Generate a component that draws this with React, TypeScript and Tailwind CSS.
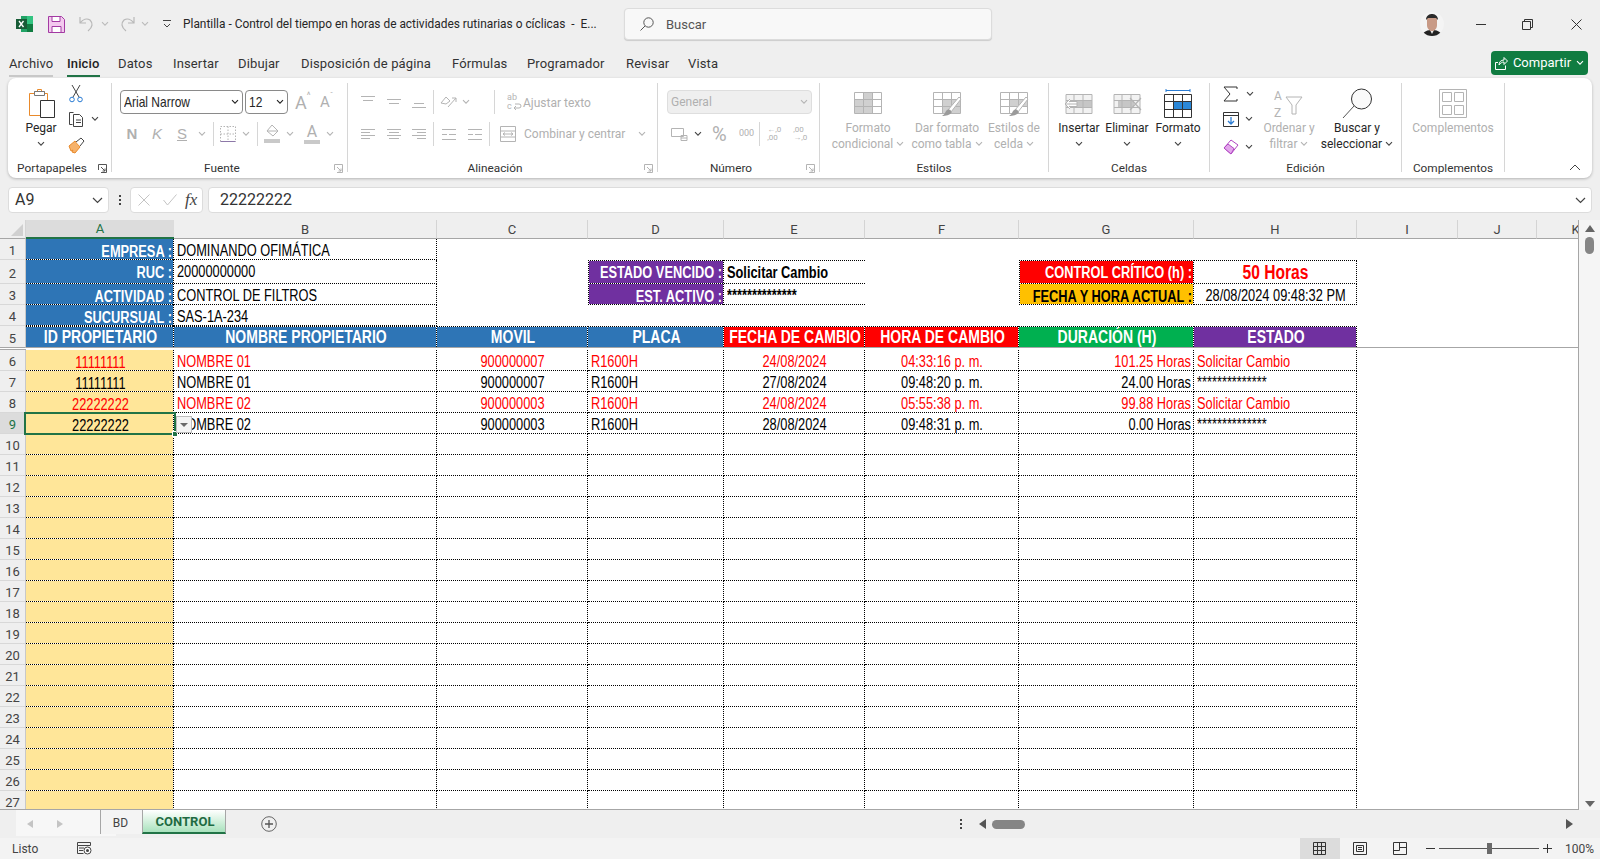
import type { ReactNode } from "react";

const gridCols =
  "grid grid-cols-[26px_148px_263px_151px_136px_141px_154px_175px_163px_101px_79px_78px] w-[1615px]";
const liberation = "font-['Liberation_Sans',sans-serif]";
const ui = "font-['Roboto','Noto_Sans',sans-serif]";
const dR = "border-r border-dotted border-r-black";
const dB = "border-b border-dotted border-b-black";
const dT = "border-t border-dotted border-t-black";

const off = "#b4b4b4";

const Chev = ({ c = "#444", className = "" }: { c?: string; className?: string }) => (
  <svg width="8" height="6" viewBox="0 0 8 6" className={`shrink-0 ${className}`}>
    <path d="M1 1.2l3 3 3-3" fill="none" stroke={c} strokeWidth="1.1" />
  </svg>
);

const Sep = ({ className = "" }: { className?: string }) => (
  <div className={`w-px h-[24px] bg-[#d6d6d6] shrink-0 ${className}`} />
);

// lines given as [x1, x2, y] in a 16x16 box
const Lines = ({ l, c = off, className = "" }: { l: number[][]; c?: string; className?: string }) => (
  <svg width="16" height="16" viewBox="0 0 16 16" className={`shrink-0 ${className}`}>
    {l.map((p, i) => (
      <path key={i} d={`M${p[0]} ${p[2]}.5H${p[1]}`} stroke={c} strokeWidth="1" />
    ))}
  </svg>
);

const Launcher = ({ c = "#8a8a8a" }: { c?: string }) => (
  <svg width="9" height="9" viewBox="0 0 9 9">
    <path d="M.5 6V.5H8.5V8.5H3M3 3l4 4M7 4.5V7H4.5" fill="none" stroke={c} strokeWidth="1" />
  </svg>
);

const Group = ({
  w,
  label,
  launcher,
  children,
  launcherColor,
}: {
  w: string;
  label: string;
  launcher?: boolean;
  children: ReactNode;
  launcherColor?: string;
}) => (
  <div className={`${w} h-[89px] my-[5px] border-r border-[#d6d6d6] flex flex-col shrink-0`}>
    <div className="h-[77px] flex shrink-0">{children}</div>
    <div
      className={`relative h-[16px] shrink-0 flex items-center justify-center text-[11.8px] leading-[16px] text-[#333] ${
        launcher ? "pr-[15px]" : ""
      }`}
    >
      {label}
      {launcher && (
        <span className="absolute right-[4px] bottom-[3px] flex">
          <Launcher c={launcherColor} />
        </span>
      )}
    </div>
  </div>
);

const Big = ({
  w,
  icon,
  lines,
  chev,
  color = "text-[#b0b0b0]",
  chevColor = off,
}: {
  w: string;
  icon: ReactNode;
  lines: string[];
  chev?: "inline" | "below";
  color?: string;
  chevColor?: string;
}) => (
  <div className={`${w} pt-[4px] flex flex-col items-center shrink-0 ${color}`}>
    <div className="h-[33px] flex items-center justify-center">{icon}</div>
    {lines.map((t, i) => (
      <div key={t} className="text-[12px] leading-[16px] flex items-center gap-[3px] whitespace-nowrap">
        {t}
        {chev === "inline" && i === lines.length - 1 && <Chev c={chevColor} />}
      </div>
    ))}
    {chev === "below" && (
      <div className="h-[16px] flex items-center">
        <Chev c={chevColor} />
      </div>
    )}
  </div>
);

const TableIcon = ({ fill, brush }: { fill: ReactNode; brush?: boolean }) => (
  <svg width="30" height="26" viewBox="0 0 30 26">
    {fill}
    <path
      d="M1.5 1.5h27v21h-27zM1.5 8.5h27M1.5 15.5h27M10.5 1.5v21M19.5 1.5v21"
      fill="none"
      stroke={off}
    />
    {brush && (
      <>
        <path d="M27 6L16 19l3 2L29 8z" fill="#fff" stroke={off} />
        <path d="M14 20c3-3 6-1 5 2-1 2-5 3-9 3 2-1 3-3 4-5z" fill="#9a9a9a" />
      </>
    )}
  </svg>
);

const CellsIcon = ({ kind }: { kind: "ins" | "del" }) => (
  <svg width="30" height="24" viewBox="0 0 30 24">
    <path d="M2 2h26v20H2z" fill="#f2f2f2" />
    <path d={kind === "ins" ? "M10 8.5h18v7H10z" : "M6 8.5h16v7H6z"} fill="#c6c6c6" />
    <path d="M2 2.5h26v19H2zM2 8.5h26M2 15.5h26M10 2.5v19M19 2.5v19" fill="none" stroke={off} />
    {kind === "ins" ? (
      <path d="M13 12H1M6 7l-5 5 5 5M5 9.5h8v5H5" fill="#fff" stroke={off} />
    ) : (
      <path d="M18 6l11 12M29 6L18 18" fill="none" stroke={off} strokeWidth="1.2" />
    )}
  </svg>
);

const Ribbon = () => (
  <div className={`${ui} mx-[8px] h-[100px] rounded-lg bg-white shadow-[0_1px_3px_rgba(0,0,0,0.25)] flex`}>
    <Group w="w-[104px]" label="Portapapeles" launcher launcherColor="#555">
      <div className="w-[60px] flex flex-col items-center pl-[6px] pt-[4px] text-[#262626]">
        <div className="h-[33px] flex items-center">
          <svg width="29" height="31" viewBox="0 0 29 31">
            <path d="M2.5 5.5h5v-2h3v-2h4v2h3v2h3v8h-6v14h-12z" fill="#fff" stroke="#e98a2b" />
            <path d="M7.5 3.5h10v4h-10z" fill="#fff" stroke="#777" />
            <path d="M13.5 12.5h14v17h-14z" fill="#fff" stroke="#333" />
          </svg>
        </div>
        <div className="text-[12px] leading-[16px]">Pegar</div>
        <div className="h-[16px] flex items-center">
          <Chev />
        </div>
      </div>
      <div className="flex flex-col">
        <div className="h-[22px] flex items-center pl-[1px]">
          <svg width="14" height="18" viewBox="0 0 14 18">
            <path d="M3 0l7 12M11 0L4 12" stroke="#444" fill="none" />
            <circle cx="3" cy="14.5" r="2.3" fill="none" stroke="#2b7cd3" />
            <circle cx="11" cy="14.5" r="2.3" fill="none" stroke="#2b7cd3" />
          </svg>
        </div>
        <div className="h-[28px] flex items-center gap-[6px]">
          <svg width="17" height="17" viewBox="0 0 17 17">
            <path d="M5.5 1.5h-4v12h3" fill="none" stroke="#444" />
            <path d="M5.5 3.5h6l3 3v9h-9zM8 9h5M8 11.5h5" fill="#fff" stroke="#444" />
          </svg>
          <Chev />
        </div>
        <div className="h-[24px] flex items-center">
          <svg width="17" height="17" viewBox="0 0 17 17">
            <path d="M1 9l6-5 5 6-5 6-3-1 1-2-2 1z" fill="#f6b26b" stroke="#e98a2b" />
            <path d="M8 5l5-4 3 3-4 5" fill="#fff" stroke="#444" />
          </svg>
        </div>
      </div>
    </Group>

    <Group w="w-[236px]" label="Fuente" launcher launcherColor={off}>
      <div className="pl-[8px] pt-[7px] text-[#262626]">
        <div className="flex items-center h-[24px]">
          <div
            className={`${liberation} w-[123px] h-[24px] rounded-[4px] border border-[#8a8a8a] flex items-center justify-between px-[3px] text-[15px]`}
          >
            <span className="block w-[100px] shrink-0 origin-left scale-x-[0.8] whitespace-nowrap">Arial Narrow</span>
            <Chev c="#222" />
          </div>
          <div
            className={`${liberation} ml-[2px] w-[43px] h-[24px] rounded-[4px] border border-[#8a8a8a] flex items-center justify-between px-[3px] text-[15px]`}
          >
            <span className="block w-[20px] shrink-0 origin-left scale-x-[0.8]">12</span>
            <Chev c="#222" />
          </div>
          <span className={`ml-[7px] w-[20px] text-[18px] text-[#b0b0b0] flex items-start`}>
            A<span className="text-[9px] leading-[12px]">^</span>
          </span>
          <span className={`ml-[5px] w-[18px] text-[15px] text-[#b0b0b0] flex items-start`}>
            A<span className="text-[8px] leading-[10px]">ˇ</span>
          </span>
        </div>
        <div className="mt-[8px] h-[24px] flex items-center text-[#b0b0b0]">
          <span className={`w-[24px] text-center font-bold text-[15px] ${liberation}`}>N</span>
          <span className={`w-[26px] text-center italic text-[15px] ${liberation}`}>K</span>
          <span className={`w-[24px] text-center underline text-[15px] ${liberation}`}>S</span>
          <Chev c={off} className="ml-[4px]" />
          <Sep className="ml-[7px]" />
          <svg width="16" height="16" viewBox="0 0 16 16" className="ml-[6px]">
            <path d="M.5.5h15v15H.5zM8 .5v15M.5 8h15" fill="none" stroke={off} strokeDasharray="1.5 1.5" />
            <path d="M.5 15.5h15" stroke="#8d78a8" />
          </svg>
          <Chev c={off} className="ml-[6px]" />
          <Sep className="ml-[7px]" />
          <svg width="16" height="20" viewBox="0 0 16 20" className="ml-[6px]">
            <path d="M8 1l6 6-5 5-6-5zM3 7h10" fill="none" stroke={off} />
            <path d="M0 15h16v4H0z" fill="#c9c9c9" />
          </svg>
          <Chev c={off} className="ml-[6px]" />
          <span className="ml-[10px] w-[16px] relative flex flex-col items-center leading-none">
            <span className="text-[16px] leading-[14px]">A</span>
            <span className="mt-[1px] w-[16px] h-[4px] bg-[#c9c9c9]" />
          </span>
          <Chev c={off} className="ml-[6px]" />
        </div>
      </div>
    </Group>

    <Group w="w-[310px]" label="Alineación" launcher launcherColor={off}>
      <div className="pl-[12px] pt-[7px]">
        <div className="h-[24px] flex items-center">
          <Lines l={[[1, 15, 2], [3, 13, 6]]} />
          <Lines l={[[1, 15, 5], [3, 13, 9]]} className="ml-[10px]" />
          <Lines l={[[3, 13, 9], [1, 15, 13]]} className="ml-[9px]" />
          <Sep className="ml-[6px]" />
          <svg width="18" height="18" viewBox="0 0 18 18" className="ml-[6px]">
            <path d="M1 10l5-6 4 4-4 3zM8 14L16 5M16 9V5h-4" fill="none" stroke={off} />
          </svg>
          <Chev c={off} className="ml-[4px]" />
          <Sep className="ml-[24px]" />
          <svg width="16" height="18" viewBox="0 0 16 18" className="ml-[11px] overflow-visible">
            <text x="1" y="7" fontSize="9" fill={off}>ab</text>
            <path d="M9 11h4a2 2 0 010 4H8M10 13l-2 2 2 2" fill="none" stroke={off} />
            <text x="1" y="16" fontSize="9" fill={off}>c</text>
          </svg>
          <span className="ml-[1px] pt-[2px] text-[12px] text-[#b0b0b0]">Ajustar texto</span>
        </div>
        <div className="mt-[8px] h-[24px] flex items-center">
          <Lines l={[[1, 15, 3], [1, 10, 6], [1, 15, 9], [1, 10, 12]]} />
          <Lines l={[[1, 15, 3], [3, 13, 6], [1, 15, 9], [3, 13, 12]]} className="ml-[10px]" />
          <Lines l={[[1, 15, 3], [6, 15, 6], [1, 15, 9], [6, 15, 12]]} className="ml-[9px]" />
          <Sep className="ml-[6px]" />
          <Lines l={[[1, 15, 3], [8, 15, 8], [1, 15, 13], [1, 6, 8]]} className="ml-[7px]" />
          <Lines l={[[1, 15, 3], [8, 15, 8], [1, 15, 13], [1, 6, 8]]} className="ml-[10px]" />
          <Sep className="ml-[6px]" />
          <svg width="16" height="16" viewBox="0 0 16 16" className="ml-[10px]">
            <path d="M.5.5h15v15H.5zM.5 5h15M.5 11h15M3 8h10M5 6.500L3 8l2 1.500M11 6.500L13 8l-2 1.500" fill="none" stroke={off} />
          </svg>
          <span className="ml-[8px] w-[114px] text-[12px] text-[#b0b0b0]">Combinar y centrar</span>
          <Chev c={off} />
        </div>
      </div>
    </Group>

    <Group w="w-[162px]" label="Número" launcher launcherColor={off}>
      <div className="pl-[9px] pt-[7px]">
        <div className="w-[145px] h-[24px] rounded-[4px] bg-[#efefef] border border-[#dedede] flex items-center justify-between px-[3px] text-[12px] text-[#b0b0b0]">
          General
          <Chev c={off} />
        </div>
        <div className="mt-[8px] h-[24px] flex items-center">
          <svg width="17" height="15" viewBox="0 0 17 15" className="ml-[4px]">
            <path d="M.5 1.500h12v8H.5zM10 8.500h6v5h-6zM10 11h6" fill="#fff" stroke={off} />
          </svg>
          <Chev c="#444" className="ml-[6px]" />
          <span className="ml-[10px] text-[20px] leading-none text-[#b0b0b0] w-[16px]">%</span>
          <span className="ml-[11px] text-[9px] text-[#b0b0b0]">000</span>
          <Sep className="ml-[5px]" />
          <span className="ml-[7px] text-[8px] leading-[8px] text-[#b0b0b0] w-[16px]">←,0<br />,00</span>
          <span className="ml-[10px] text-[8px] leading-[8px] text-[#b0b0b0] w-[16px]">,00<br />→,0</span>
        </div>
      </div>
    </Group>

    <Group w="w-[229px]" label="Estilos">
      <div className="pl-[8px] flex">
        <Big
          w="w-[80px]"
          lines={["Formato", "condicional"]}
          chev="inline"
          icon={<TableIcon fill={<path d="M1 8h19v7H1zM10 1h10v7H10zM1 15h19v7H1z" fill="#d0d0d0" />} />}
        />
        <Big
          w="w-[78px]"
          lines={["Dar formato", "como tabla"]}
          chev="inline"
          icon={<TableIcon brush fill={<path d="M10 8h18v14H10z" fill="#d0d0d0" />} />}
        />
        <Big
          w="w-[56px]"
          lines={["Estilos de", "celda"]}
          chev="inline"
          icon={<TableIcon brush fill={<path d="M10 8h18v7H10z" fill="#d0d0d0" />} />}
        />
      </div>
    </Group>

    <Group w="w-[161px]" label="Celdas">
      <div className="pl-[5px] flex">
        <Big w="w-[50px]" lines={["Insertar"]} chev="below" color="text-[#262626]" chevColor="#444" icon={<CellsIcon kind="ins" />} />
        <Big w="w-[46px]" lines={["Eliminar"]} chev="below" color="text-[#262626]" chevColor="#444" icon={<CellsIcon kind="del" />} />
        <Big
          w="w-[56px]"
          lines={["Formato"]}
          chev="below"
          color="text-[#262626]"
          chevColor="#444"
          icon={
            <svg width="30" height="30" viewBox="0 0 30 30">
              <path d="M3 1.500h24M3 0v3M27 0v3" stroke="#2b7cd3" fill="none" />
              <path d="M10 12h19v9H10z" fill="#2b88d8" />
              <path d="M1.500 5.500h27v23h-27zM1.500 12.500h27M1.500 20.500h27M10.500 5.500v23M19.500 5.500v23" fill="none" stroke="#333" />
            </svg>
          }
        />
      </div>
    </Group>

    <Group w="w-[192px]" label="Edición">
      <div className="flex">
        <div className="w-[52px] pl-[13px] flex flex-col shrink-0">
          <div className="h-[22px] flex items-center gap-[8px]">
            <svg width="15" height="16" viewBox="0 0 15 16">
              <path d="M14 3V1H1l6 7-6 7h13v-2" fill="none" stroke="#333" />
            </svg>
            <Chev />
          </div>
          <div className="h-[28px] flex items-center gap-[6px]">
            <svg width="16" height="15" viewBox="0 0 16 15">
              <path d="M.5.5h15v14H.5zM.5 3.500h15" fill="none" stroke="#333" />
              <path d="M8 5v7M5 9l3 3 3-3" fill="none" stroke="#2b7cd3" strokeWidth="1.300" />
            </svg>
            <Chev />
          </div>
          <div className="h-[27px] flex items-center gap-[6px]">
            <svg width="16" height="16" viewBox="0 0 16 16">
              <path d="M1 9l7-8 7 5-7 9z" fill="#fff" stroke="#b146c2" />
              <path d="M1 9l4-4 6 4.500L8 15z" fill="#e3a6ec" stroke="#b146c2" />
            </svg>
            <Chev />
          </div>
        </div>
        <Big
          w="w-[54px]"
          lines={["Ordenar y", "filtrar"]}
          chev="inline"
          icon={
            <svg width="30" height="30" viewBox="0 0 30 30" className="overflow-visible">
              <text x="0" y="11" fontSize="12" fill={off}>A</text>
              <text x="0" y="28" fontSize="12" fill={off}>Z</text>
              <path d="M12 8h16l-6 8v9h-4v-9z" fill="#fff" stroke={off} />
            </svg>
          }
        />
        <Big
          w="w-[82px]"
          lines={["Buscar y", "seleccionar"]}
          chev="inline"
          color="text-[#262626]"
          chevColor="#444"
          icon={
            <svg width="31" height="31" viewBox="0 0 31 31">
              <circle cx="19.500" cy="11" r="10" fill="#fafafa" stroke="#333" />
              <path d="M12 18L1 30" stroke="#555" />
            </svg>
          }
        />
      </div>
    </Group>

    <Group w="w-[103px]" label="Complementos">
      <div className="w-full flex justify-center">
        <Big
          w="w-full"
          lines={["Complementos"]}
          icon={
            <svg width="28" height="29" viewBox="0 0 28 29">
              <path d="M.5.5h27v28H.5zM3.500 3.500h9v9h-9zM15.500 3.500h9v9h-9zM3.500 16.500h9v9h-9zM15.500 16.500h9v9h-9z" fill="none" stroke={off} />
            </svg>
          }
        />
      </div>
    </Group>

    <div className="flex-1 flex items-end justify-end pb-[7px] pr-[11px]">
      <svg width="12" height="7" viewBox="0 0 12 7">
        <path d="M1 6l5-5 5 5" fill="none" stroke="#444" />
      </svg>
    </div>
  </div>
);

// dotted edges of the filled cells, black dots with white between as in the sheet
const hDots = "absolute left-0 right-0 h-px bg-[repeating-linear-gradient(90deg,#000_0,#000_1px,#fff_1px,#fff_2px)]";
const vDots = "absolute top-0 bottom-0 w-px bg-[repeating-linear-gradient(180deg,#000_0,#000_1px,#fff_1px,#fff_2px)]";

const Dots = ({ sides }: { sides: string }) => (
  <>
    {sides.includes("t") && <span className={`${hDots} top-0`} />}
    {sides.includes("b") && <span className={`${hDots} bottom-0`} />}
    {sides.includes("l") && <span className={`${vDots} left-0`} />}
    {sides.includes("r") && <span className={`${vDots} right-0`} />}
  </>
);

// Arial Narrow isn't installed: Liberation Sans squeezed to 80%
const Cell = ({
  className = "",
  align = "text-left",
  size = "text-[16px]",
  pad = "pt-[4px]",
  dots = "",
  children,
}: {
  className?: string;
  align?: string;
  size?: string;
  pad?: string;
  dots?: string;
  children?: ReactNode;
}) => (
  <div className={`${liberation} relative flex items-center whitespace-nowrap pl-[3px] pr-[2px] overflow-visible min-h-0 ${pad} ${className}`}>
    <span className={`block w-[125%] shrink-0 origin-left scale-x-[0.8] leading-none ${size} ${align}`}>{children}</span>
    <Dots sides={dots} />
  </div>
);

const RowHead = ({ n, sel, line }: { n: number; sel?: boolean; line?: boolean }) => (
  <div
    className={`${ui} pt-[3px] text-[13px] leading-none flex items-center justify-center border-r border-r-[#c8c8c8] ${
      line ? "border-b border-b-[#a6a6a6]" : "border-b border-b-[#d8d8d8]"
    } ${sel ? "bg-[#dcdcdc] text-[#217346]" : "bg-[#efefef] text-[#444]"}`}
  >
    {n}
  </div>
);

const ColHead = ({ t, sel }: { t: string; sel?: boolean }) => (
  <div
    className={`flex items-center justify-center text-[13px] leading-none ${
      sel
        ? "bg-[#dcdcdc] text-[#217346] border-b-2 border-b-[#217346]"
        : "bg-[#efefef] text-[#444] border-b border-b-[#a6a6a6] border-r border-r-[#d4d4d4]"
    }`}
  >
    {t}
  </div>
);

const plain = `text-black ${dB} ${dR}`;

const topRows = [
  { n: 1, h: "h-[21px]", a: "EMPRESA :", b: "DOMINANDO OFIMÁTICA" },
  { n: 2, h: "h-[24px]", a: "RUC :", b: "20000000000" },
  { n: 3, h: "h-[21px]", a: "ACTIVIDAD :", b: "CONTROL DE FILTROS" },
  { n: 4, h: "h-[21px]", a: "SUCURSUAL :", b: "SAS-1A-234" },
];

const data = [
  { id: "11111111", name: "NOMBRE 01", mov: "900000007", fecha: "24/08/2024", hora: "04:33:16 p. m.", dur: "101.25 Horas", est: "Solicitar Cambio", red: true },
  { id: "11111111", name: "NOMBRE 01", mov: "900000007", fecha: "27/08/2024", hora: "09:48:20 p. m.", dur: "24.00 Horas", est: "**************", red: false },
  { id: "22222222", name: "NOMBRE 02", mov: "900000003", fecha: "24/08/2024", hora: "05:55:38 p. m.", dur: "99.88 Horas", est: "Solicitar Cambio", red: true },
  { id: "22222222", name: "NOMBRE 02", mov: "900000003", fecha: "28/08/2024", hora: "09:48:31 p. m.", dur: "0.00 Horas", est: "**************", red: false },
];

const emptyRows = Array.from({ length: 18 }, (_, i) => i + 10);
const headers = [
  { t: "ID PROPIETARIO", bg: "bg-[#2e75b6]" },
  { t: "NOMBRE PROPIETARIO", bg: "bg-[#2e75b6]" },
  { t: "MOVIL", bg: "bg-[#2e75b6]" },
  { t: "PLACA", bg: "bg-[#2e75b6]" },
  { t: "FECHA DE CAMBIO", bg: "bg-[#ff0000]" },
  { t: "HORA DE CAMBIO", bg: "bg-[#ff0000]" },
  { t: "DURACIÓN (H)", bg: "bg-[#00b050]" },
  { t: "ESTADO", bg: "bg-[#7030a0]" },
];

const Sheet = () => (
  <div className="flex h-[590px]">
    <div className="w-[1579px] overflow-hidden bg-white border-r border-b border-[#a6a6a6]">
      <div className={`${gridCols} h-[19px] ${ui}`}>
        <div className="bg-[#efefef] border-b border-b-[#a6a6a6] border-r border-r-[#d4d4d4] flex items-end justify-end p-[2px]">
          <svg width="12" height="12" viewBox="0 0 12 12">
            <path d="M12 0v12H0z" fill="#d0d0d0" />
          </svg>
        </div>
        <ColHead t="A" sel />
        {["B", "C", "D", "E", "F", "G", "H", "I", "J", "K"].map((c) => (
          <ColHead key={c} t={c} />
        ))}
      </div>

      {topRows.map((r) => {
        const pad = r.n === 2 ? "pt-[1px]" : "pt-[4px]";
        return (
          <div key={r.n} className={`${gridCols} ${r.h}`}>
            <RowHead n={r.n} />
            <Cell className="bg-[#2e75b6] text-white font-bold" dots="br" pad={pad} align="text-right">{r.a}</Cell>
            <Cell className={plain} pad={pad}>{r.b}</Cell>
            <div />
            {r.n === 2 && (
              <>
                <Cell className="bg-[#7030a0] text-white font-bold" dots="tblr" pad={pad} align="text-right">ESTADO VENCIDO :</Cell>
                <Cell className={`font-bold text-black ${dT} ${dB}`} pad={pad}>Solicitar Cambio</Cell>
                <div />
                <Cell className="bg-[#ff0000] text-white font-bold" dots="tblr" pad={pad} align="text-right">CONTROL CRÍTICO (h) :</Cell>
                <Cell className={`font-bold text-[#ff0000] ${dT} ${dB} ${dR}`} pad={pad} align="text-center" size="text-[19.5px]">50 Horas</Cell>
              </>
            )}
            {r.n === 3 && (
              <>
                <Cell className="bg-[#7030a0] text-white font-bold" dots="blr" align="text-right">EST. ACTIVO :</Cell>
                <Cell className={`font-bold text-black ${dB}`}>**************</Cell>
                <div />
                <Cell className="bg-[#ffc000] text-black font-bold" dots="blr" align="text-right">FECHA Y HORA ACTUAL :</Cell>
                <Cell className={`text-black ${dB} ${dR}`} align="text-center">28/08/2024 09:48:32 PM</Cell>
              </>
            )}
          </div>
        );
      })}

      <div className={`${gridCols} h-[24px]`}>
        <RowHead n={5} line />
        {headers.map((h) => (
          <Cell
            key={h.t}
            className={`text-white font-bold border-b border-b-[#a6a6a6] ${h.bg}`}
            dots="tr"
            pad="pt-[3px]"
            align="text-center"
            size="text-[17.5px]"
          >
            {h.t}
          </Cell>
        ))}
        <div className="border-b border-b-[#a6a6a6]" />
        <div className="border-b border-b-[#a6a6a6]" />
        <div className="border-b border-b-[#a6a6a6]" />
        <div className="border-b border-b-[#a6a6a6]" />
      </div>

      {data.map((d, i) => {
        const color = d.red ? "text-[#ff0000]" : "text-black";
        const base = `${color} ${dB} ${dR}`;
        return (
          <div key={i} className={`${gridCols} h-[21px]`}>
            <RowHead n={i + 6} sel={i === 3} />
            <Cell className={`bg-[#ffe699] ${color}`} dots="br" align="text-center">{d.id}</Cell>
            <Cell className={base}>{d.name}</Cell>
            <Cell className={base} align="text-center">{d.mov}</Cell>
            <Cell className={base}>R1600H</Cell>
            <Cell className={base} align="text-center">{d.fecha}</Cell>
            <Cell className={base} align="text-center">{d.hora}</Cell>
            <Cell className={base} align="text-right">{d.dur}</Cell>
            <Cell className={base}>{d.est}</Cell>
          </div>
        );
      })}

      {emptyRows.map((n) => (
        <div key={n} className={`${gridCols} h-[21px]`}>
          <RowHead n={n} />
          <div className="relative bg-[#ffe699]">
            <Dots sides="br" />
          </div>
          {[0, 1, 2, 3, 4, 5, 6].map((c) => (
            <div key={c} className={`${dB} ${dR}`} />
          ))}
        </div>
      ))}
    </div>

    <div className="w-[21px] flex flex-col items-center justify-between bg-[#f5f5f5] pb-[3px]">
      <div className="flex flex-col items-center">
        <svg width="10" height="7" viewBox="0 0 10 7" className="mt-[5px]">
          <path d="M5 0l5 7H0z" fill="#666" />
        </svg>
        <div className="mt-[5px] w-[9px] h-[17px] rounded-full bg-[#858585]" />
      </div>
      <svg width="10" height="6" viewBox="0 0 10 6">
        <path d="M0 0h10L5 6z" fill="#666" />
      </svg>
    </div>
  </div>
);

const Tabs = () => (
  <div className={`${ui} h-[28px] flex bg-[#efefef]`}>
    <div className="w-[100px] ml-[16px] -mr-[16px] bg-[#f7f7f7] pl-[11px] pt-[2px] flex items-center gap-[24px] h-[26px]">
      <svg width="6" height="8" viewBox="0 0 6 8">
        <path d="M6 0v8L0 4z" fill="#c4c4c4" />
      </svg>
      <svg width="6" height="8" viewBox="0 0 6 8">
        <path d="M0 0v8l6-4z" fill="#c4c4c4" />
      </svg>
    </div>
    <div className="w-[42px] h-[24px] pt-[2px] pr-[2px] border-l border-l-[#a6a6a6] bg-[#f4f4f4] flex items-center justify-center text-[12px] text-[#444]">
      BD
    </div>
    <div className="w-[84px] h-[24px] pt-[1px] pl-[2px] border-x border-x-[#a6a6a6] border-b-2 border-b-[#217346] bg-linear-to-b from-white to-[#a8e2bd] flex items-center justify-center text-[13px] font-bold text-[#1e6b42]">
      CONTROL
    </div>
    <div className="ml-[35px] h-[28px] flex items-center">
      <svg width="16" height="16" viewBox="0 0 16 16">
        <circle cx="8" cy="8" r="7.300" fill="none" stroke="#666" />
        <path d="M8 4v8M4 8h8" stroke="#555" strokeWidth="1.300" />
      </svg>
    </div>
    <div className="w-[14px] h-[28px] flex flex-col items-center justify-center gap-[2px] ml-[677px]">
      <span className="w-[2px] h-[2px] bg-[#444]" />
      <span className="w-[2px] h-[2px] bg-[#444]" />
      <span className="w-[2px] h-[2px] bg-[#444]" />
    </div>
    <div className="ml-[6px] w-[606px] h-[28px] flex items-center">
      <svg width="7" height="10" viewBox="0 0 7 10" className="ml-[5px]">
        <path d="M7 0v10L0 5z" fill="#555" />
      </svg>
      <div className="ml-[6px] w-[33px] h-[9px] rounded-full bg-[#858585]" />
      <svg width="7" height="10" viewBox="0 0 7 10" className="ml-auto mr-[7px]">
        <path d="M0 0v10l7-5z" fill="#555" />
      </svg>
    </div>
  </div>
);

const Status = () => (
  <div className={`${ui} h-[21px] bg-[#f3f3f3] flex items-center text-[12px] text-[#444]`}>
    <span className="ml-[12px]">Listo</span>
    <svg width="15" height="13" viewBox="0 0 15 13" className="ml-[39px]">
      <path d="M.5.5h13v3H.5zM.5 3.500v8h6M2 6h5M2 8.500h4" fill="none" stroke="#444" />
      <circle cx="10.500" cy="8.500" r="3.500" fill="#fff" stroke="#444" />
      <circle cx="10.500" cy="8.500" r="1.500" fill="#444" />
    </svg>
    <div className="ml-auto w-[40px] h-[21px] bg-[#dcdcdc] flex items-center justify-center">
      <svg width="13" height="13" viewBox="0 0 13 13">
        <path d="M.5.5h12v12H.5zM.5 4.500h12M.5 8.500h12M4.500.5v12M8.500.5v12" fill="none" stroke="#333" />
      </svg>
    </div>
    <div className="w-[40px] flex justify-center">
      <svg width="14" height="13" viewBox="0 0 14 13">
        <path d="M.5.5h13v12H.5zM3.500 3.500h7v6h-7zM5 5.500h4M5 7.500h4" fill="none" stroke="#333" />
      </svg>
    </div>
    <div className="w-[40px] flex justify-center">
      <svg width="14" height="13" viewBox="0 0 14 13">
        <path d="M.5.500h13v12H.5zM.5 8.500h6V.5M6.500 5.500h7" fill="none" stroke="#333" />
      </svg>
    </div>
    <span className="ml-[6px] w-[9px] h-px bg-[#333]" />
    <div className="ml-[4px] w-[100px] h-px bg-[#555] relative">
      <span className="absolute left-[48px] -top-[5px] w-[5px] h-[11px] bg-[#6a6a6a]" />
    </div>
    <svg width="9" height="9" viewBox="0 0 9 9" className="ml-[4px]">
      <path d="M4.500 0v9M0 4.500h9" stroke="#333" />
    </svg>
    <span className="ml-[13px] mr-[6px] text-[12px]">100%</span>
  </div>
);

const menu = [
  { t: "Archivo", w: "w-[58px]" },
  { t: "Inicio", w: "w-[51px]" },
  { t: "Datos", w: "w-[55px]" },
  { t: "Insertar", w: "w-[65px]" },
  { t: "Dibujar", w: "w-[63px]" },
  { t: "Disposición de página", w: "w-[151px]" },
  { t: "Fórmulas", w: "w-[75px]" },
  { t: "Programador", w: "w-[99px]" },
  { t: "Revisar", w: "w-[62px]" },
  { t: "Vista", w: "w-[40px]" },
];

export default function App() {
  return (
    <div className={`${ui} relative w-[1600px] h-[859px] overflow-hidden bg-[#efefef] text-[#262626]`}>
      {/* title bar */}
      <div className="h-[48px] flex items-center">
        <svg width="17" height="16" viewBox="0 0 17 16" className="ml-[16px]">
          <path d="M5 0h12v16H5z" fill="#21a366" />
          <path d="M11 0h6v8h-6z" fill="#33c481" />
          <path d="M11 8h6v8h-6z" fill="#107c41" />
          <path d="M0 3h11v10H0z" fill="#185c37" />
          <path d="M3 5l4.500 6M7.500 5L3 11" stroke="#fff" strokeWidth="1.300" />
        </svg>
        <svg width="17" height="17" viewBox="0 0 17 17" className="ml-[15px]">
          <path d="M.5.5h13l3 3v13H.5z" fill="#f3c9ee" stroke="#a33aa3" />
          <path d="M4 .5h8v5H4zM4 10.500h9v6H4z" fill="#fff" stroke="#a33aa3" />
        </svg>
        <svg width="16" height="16" viewBox="0 0 16 16" className="ml-[14px]">
          <path d="M1 1v6h6M1 7c3-4 7-5 10-3 3 3 3 7-2 11" fill="none" stroke="#b8b8b8" strokeWidth="1.200" />
        </svg>
        <Chev c="#bbb" className="ml-[6px]" />
        <svg width="16" height="16" viewBox="0 0 16 16" className="ml-[10px]">
          <path d="M15 1v6H9M15 7c-3-4-7-5-10-3-3 3-3 7 2 11" fill="none" stroke="#b8b8b8" strokeWidth="1.200" />
        </svg>
        <Chev c="#bbb" className="ml-[6px]" />
        <svg width="10" height="9" viewBox="0 0 10 9" className="ml-[13px]">
          <path d="M1 .5h8M2 4l3 3 3-3" fill="none" stroke="#444" />
        </svg>
        <span className="ml-[11px] w-[426px] pt-[1px] text-[11.9px] whitespace-pre">Plantilla - Control del tiempo en horas de actividades rutinarias o cíclicas  -  E...</span>
        <div className="ml-[15px] w-[368px] h-[32px] rounded-[4px] bg-[#f8f8f8] border border-[#dcdcdc] shadow-[0_1px_1px_rgba(0,0,0,0.15)] flex items-center text-[#555] text-[13px]">
          <svg width="14" height="14" viewBox="0 0 14 14" className="ml-[15px]">
            <circle cx="8.500" cy="5.500" r="4.700" fill="none" stroke="#555" />
            <path d="M5 9l-4.500 4.500" stroke="#555" />
          </svg>
          <span className="ml-[12px] pt-[1px]">Buscar</span>
        </div>
        <svg width="24" height="24" viewBox="0 0 24 24" className="ml-[428px]">
          <defs>
            <clipPath id="av"><circle cx="12" cy="12" r="12" /></clipPath>
          </defs>
          <g clipPath="url(#av)">
            <path d="M0 0h24v24H0z" fill="#f4f4f4" />
            <path d="M2 24c1-5 6-6 10-6s9 1 10 6z" fill="#222" />
            <path d="M10 18l2 4 2-4z" fill="#eee" />
            <path d="M7 6h10v7c0 4-3 6-5 6s-5-2-5-6z" fill="#c89a86" />
            <path d="M6 8c0-5 4-6 6-6s6 1 6 6l-2-2H8z" fill="#2a2a2a" />
          </g>
        </svg>
        <span className="ml-[32px] w-[10px] h-px bg-[#333]" />
        <svg width="11" height="11" viewBox="0 0 11 11" className="ml-[36px]">
          <path d="M.5 2.500h8v8h-8zM2.500 2.500v-2h8v8h-2" fill="none" stroke="#333" />
        </svg>
        <svg width="11" height="11" viewBox="0 0 11 11" className="ml-[38px]">
          <path d="M.5.5l10 10M10.500.5l-10 10" stroke="#333" />
        </svg>
      </div>

      {/* menu tabs */}
      <div className="h-[30px] pl-[9px] flex items-center text-[13px] text-[#333]">
        {menu.map((m) => (
          <span key={m.t} className={`${m.w} shrink-0 whitespace-nowrap pt-[2px]`}>
            <span
              className={`relative inline-block tracking-[0.13px] ${m.t === "Inicio" ? "font-medium text-[#222]" : ""}`}
            >
              {m.t}
              {m.t === "Archivo" && <span className="absolute left-0 right-0 -bottom-[3px] h-[2px] bg-[#c8c8c8]" />}
              {m.t === "Inicio" && <span className="absolute left-0 right-0 -bottom-[3px] h-[2px] bg-[#217346]" />}
            </span>
          </span>
        ))}
        <div className="ml-auto mr-[12px] w-[97px] h-[24px] rounded-[4px] bg-[#107c41] text-white flex items-center justify-center gap-[5px]">
          <svg width="13" height="13" viewBox="0 0 13 13">
            <path d="M3 5.500H.5v7h10v-4M4 8c0-3 2-5 5-5V.5L12.500 4 9 7.500V5C7 5 5.500 6 4 8z" fill="none" stroke="#fff" />
          </svg>
          Compartir
          <Chev c="#fff" />
        </div>
      </div>

      <Ribbon />

      {/* formula bar */}
      <div className="mt-[9px] mx-[8px] h-[26px] flex items-stretch">
        <div className="w-[101px] rounded-[4px] bg-white border border-[#dcdcdc] flex items-center justify-between pl-[6px] pr-[5px] text-[16px] text-[#333]">
          A9
          <svg width="11" height="7" viewBox="0 0 11 7">
            <path d="M1 1l4.500 4.500L10 1" fill="none" stroke="#444" strokeWidth="1.200" />
          </svg>
        </div>
        <div className="w-[21px] flex flex-col items-center justify-center gap-[2px]">
          <span className="w-[2px] h-[2px] bg-[#444]" />
          <span className="w-[2px] h-[2px] bg-[#444]" />
          <span className="w-[2px] h-[2px] bg-[#444]" />
        </div>
        <div className="w-[73px] rounded-[4px] bg-white border border-[#dcdcdc] flex items-center pl-[7px]">
          <svg width="12" height="12" viewBox="0 0 12 12">
            <path d="M.5.5l11 11M11.500.5l-11 11" stroke="#c4c4c4" />
          </svg>
          <svg width="14" height="12" viewBox="0 0 14 12" className="ml-[13px]">
            <path d="M.5 6l4 5L13.500.5" fill="none" stroke="#c4c4c4" />
          </svg>
          <span className="ml-[8px] text-[17px] italic font-['Liberation_Serif',serif] text-[#444]">fx</span>
        </div>
        <div className="ml-[5px] flex-1 rounded-[4px] bg-white border border-[#dcdcdc] flex items-center justify-between pl-[11px] pr-[5px] text-[16px] text-[#333]">
          22222222
          <svg width="11" height="7" viewBox="0 0 11 7">
            <path d="M1 1l4.500 4.500L10 1" fill="none" stroke="#444" strokeWidth="1.200" />
          </svg>
        </div>
      </div>

      <div className="h-[7px]" />
      <Sheet />
      <Tabs />
      <Status />

      {/* selected cell A9 and its paste button, over the sheet */}
      <div className="absolute left-[24px] top-[412px] w-[152px] h-[23px] border-2 border-[#217346] pointer-events-none">
        <span className="absolute -right-[4px] -bottom-[4px] w-[6px] h-[6px] bg-[#217346] border border-white" />
      </div>
      <div className="absolute left-[176px] top-[416px] w-[16px] h-[17px] bg-[#f4f4f4] border border-[#bdbdbd] flex items-center justify-center">
        <svg width="8" height="4" viewBox="0 0 8 4">
          <path d="M0 0h8L4 4z" fill="#6a6a6a" />
        </svg>
      </div>
    </div>
  );
}
